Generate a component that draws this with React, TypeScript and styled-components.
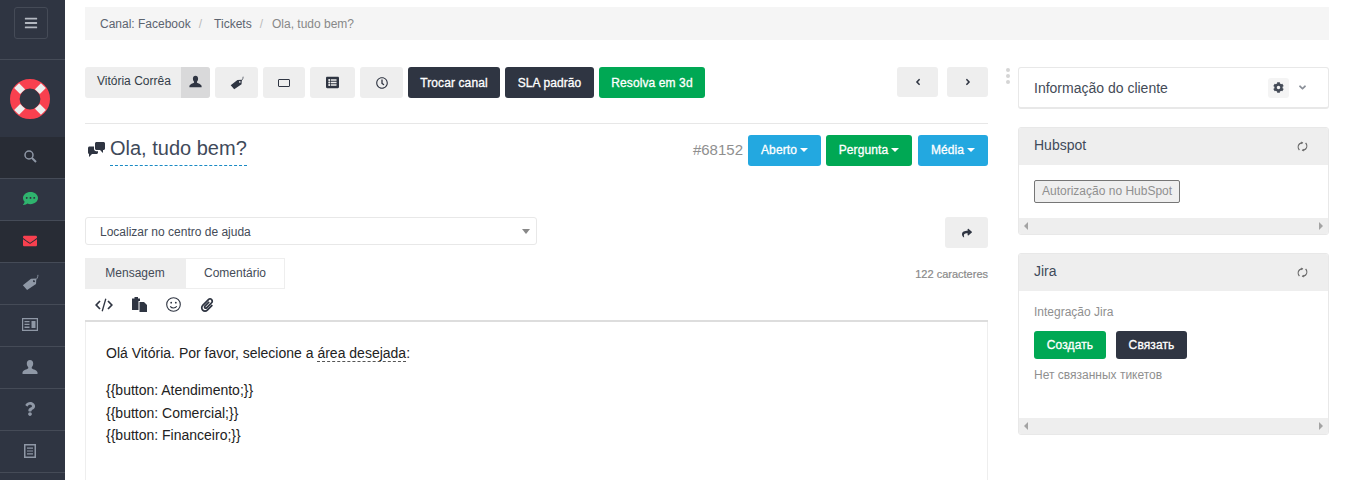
import styled, { createGlobalStyle } from "styled-components";
import {
  FaCog,
  FaCommentDots,
  FaEnvelope,
  FaPaperclip,
  FaQuestion,
  FaShare,
  FaListAlt,
  FaRegClock,
  FaAngleLeft,
  FaAngleRight,
  FaAngleDown,
  FaBars,
} from "react-icons/fa";

const GlobalStyle = createGlobalStyle`
  html, body {
    margin: 0;
    height: 100%;
    overflow: hidden;
    background: #fff;
    font-family: "Liberation Sans", Arial, sans-serif;
    font-size: 12px;
    color: #333;
  }
  * { box-sizing: border-box; }
`;

const LifeRing = () => (
  <svg width="40" height="40" viewBox="0 0 40 40">
    <circle cx="20" cy="20" r="15.2" fill="none" stroke="#f9404f" strokeWidth="9.6" />
    <g stroke="#eee" strokeWidth="7">
      <line x1="6.6" y1="6.6" x2="12.6" y2="12.6" />
      <line x1="33.4" y1="6.6" x2="27.4" y2="12.6" />
      <line x1="6.6" y1="33.4" x2="12.6" y2="27.4" />
      <line x1="33.4" y1="33.4" x2="27.4" y2="27.4" />
    </g>
  </svg>
);

const ChatBubbles = () => (
  <svg width="17" height="15" viewBox="0 0 17 15" fill="#2f3542">
    <path d="M7 1.500C7 .7 7.700 0 8.500 0h7C16.300 0 17 .7 17 1.500v5c0 .8-.7 1.500-1.500 1.500H15v3l-3-3H8.500C7.700 8 7 7.300 7 6.500z" />
    <path d="M0 6c0-.8.700-1.500 1.500-1.500H6v2.500C6 8.200 7 9.200 8.200 9.200H10v1.300c0 .8-.7 1.500-1.500 1.500H4l-3 3v-3.100C.4 11.700 0 11.200 0 10.500z" />
  </svg>
);

const UserIcon = ({ size }: { size: number }) => (
  <svg width={size} height={size} viewBox="0 0 16 16" fill="currentColor">
    <path d="M8 1C6 1 4.800 2.500 4.800 4.500c0 1.400.5 2.700 1.300 3.500.3.400.3 1 0 1.400C4.800 10.300 1.400 10.800 .5 13.200V15h15v-1.800c-.9-2.400-4.300-2.900-5.600-3.800-.3-.4-.3-1 0-1.400.8-.8 1.300-2.100 1.300-3.500C11.200 2.500 10 1 8 1z" />
  </svg>
);

const TagIcon = ({ size }: { size: number }) => (
  <svg width={size} height={size} viewBox="0 0 16 16">
    <path
      fill="currentColor"
      fillRule="evenodd"
      d="M.8 10.500 8.500 4.500l5-.2-.3 5L4.800 15zM10.700 5.900a1 1 0 1 0 1.200 1.600 1 1 0 0 0-1.200-1.600z"
    />
    <path d="M11.800 6C13.800 5.200 15 3.500 15 .8" fill="none" stroke="currentColor" strokeWidth=".8" />
  </svg>
);

const SearchIcon = () => (
  <svg width="13" height="13" viewBox="0 0 13 13" fill="none" stroke="currentColor">
    <circle cx="5" cy="5" r="4" strokeWidth="1.500" />
    <line x1="8" y1="8" x2="12" y2="12" strokeWidth="2" />
  </svg>
);

const CardIcon = () => (
  <svg width="16" height="13" viewBox="0 0 16 13" fill="currentColor">
    <path
      fillRule="evenodd"
      d="M0 0h16v13H0zM1.200 1.200v10.600h13.600V1.200z"
    />
    <path d="M2.500 3h5v1.300h-5zM2.500 5.800h5v1.300h-5zM2.500 8.600h5v1.300h-5zM9.500 3h4v6.900h-4z" />
  </svg>
);

const DocIcon = () => (
  <svg width="12" height="14" viewBox="0 0 12 14" fill="currentColor">
    <path fillRule="evenodd" d="M0 0h12v14H0zM1.500 1.500v11h9v-11z" />
    <path d="M3 3.500h6v1.200H3zM3 6.400h6v1.200H3zM3 9.300h6v1.200H3z" />
  </svg>
);

const CodeIcon = () => (
  <svg width="18" height="14" viewBox="0 0 18 14" fill="none" stroke="currentColor" strokeWidth="1.700">
    <path d="M5 3 1.200 7 5 11M13 3l3.800 4L13 11" />
    <path d="M10.800 .8 7.200 13.200" strokeWidth="1.300" />
  </svg>
);

const PasteIcon = () => (
  <svg width="15" height="15" viewBox="0 0 15 15" fill="currentColor">
    <path d="M0 1.500h2.500V0h3.500v1.500h2V4H6.500v9H0z" />
    <path d="M7.500 5h4.500l3 3v7H7.500z" />
  </svg>
);

const SmileIcon = () => (
  <svg width="15" height="15" viewBox="0 0 15 15" fill="none" stroke="currentColor" strokeWidth="1.100">
    <circle cx="7.500" cy="7.500" r="6.800" />
    <path d="M4.200 9.300c1.700 2.200 5 2.200 6.600 0" />
    <circle cx="5.200" cy="5.700" r=".9" fill="currentColor" stroke="none" />
    <circle cx="9.800" cy="5.700" r=".9" fill="currentColor" stroke="none" />
  </svg>
);

const RefreshIcon = () => (
  <svg width="11" height="11" viewBox="0 0 11 11" fill="none" stroke="#666" strokeWidth="1.200">
    <path d="M2.400 9C.8 7.300.8 4.600 2.400 3c.9-.9 1.900-1.200 3-1.200" />
    <path d="M8.600 2c1.600 1.700 1.600 4.400 0 6-.9.900-1.900 1.200-3 1.200" />
    <path d="M4.300.4l2 1.400-2 1.400zM6.700 7.800l-2 1.400 2 1.400z" fill="#666" stroke="none" />
  </svg>
);

const menuItems = [
  { icon: <SearchIcon />, dark: true, color: "#8f98a6" },
  { icon: <FaCommentDots size={15} />, dark: false, color: "#2fb46e" },
  { icon: <FaEnvelope size={14} />, dark: true, color: "#f9404f" },
  { icon: <TagIcon size={17} />, dark: false, color: "#8f98a6" },
  { icon: <CardIcon />, dark: false, color: "#8f98a6" },
  { icon: <UserIcon size={16} />, dark: false, color: "#8f98a6" },
  { icon: <FaQuestion size={14} />, dark: false, color: "#8f98a6" },
  { icon: <DocIcon />, dark: false, color: "#8f98a6" },
];

const App = () => {
  return (
    <Layout>
      <GlobalStyle />
      <Sidebar>
        <MenuTop>
          <MenuToggle>
            <FaBars size={14} />
          </MenuToggle>
        </MenuTop>
        <LogoBox>
          <LifeRing />
        </LogoBox>
        {menuItems.map((item, i) => (
          <MenuItem key={i} $dark={item.dark} $color={item.color}>
            {item.icon}
          </MenuItem>
        ))}
      </Sidebar>

      <Content>
        <Breadcrumb>
          <Crumb>Canal: Facebook</Crumb>
          <CrumbSep $extra={3}>/</CrumbSep>
          <Crumb>Tickets</Crumb>
          <CrumbSep>/</CrumbSep>
          <CrumbActive>Ola, tudo bem?</CrumbActive>
        </Breadcrumb>

        <Columns>
          <MainColumn>
            <Toolbar>
              <AgentGroup>
                <AgentName>Vitória Corrêa</AgentName>
                <AgentIcon>
                  <UserIcon size={13} />
                </AgentIcon>
              </AgentGroup>
              <GreyButton $width={43}>
                <TagIcon size={14} />
              </GreyButton>
              <GreyButton $width={42}>
                <RectIcon />
              </GreyButton>
              <GreyButton $width={45}>
                <FaListAlt size={13} />
              </GreyButton>
              <GreyButton $width={43}>
                <FaRegClock size={12} />
              </GreyButton>
              <ActionButton $bg="#2f3542" $width={92}>Trocar canal</ActionButton>
              <ActionButton $bg="#2f3542" $width={89}>SLA padrão</ActionButton>
              <ActionButton $bg="#00a854" $width={106}>Resolva em 3d</ActionButton>
              <Pager>
                <PagerButton>
                  <FaAngleLeft size={10} />
                </PagerButton>
                <PagerButton>
                  <FaAngleRight size={10} />
                </PagerButton>
              </Pager>
            </Toolbar>

            <Divider />

            <TitleRow>
              <TitleLeft>
                <ChatBubbles />
                <Title>Ola, tudo bem?</Title>
              </TitleLeft>
              <TitleRight>
                <TicketId>#68152</TicketId>
                <DropButton $bg="#23a8e0" $width={73}>Aberto<Caret /></DropButton>
                <DropButton $bg="#00a854" $width={86}>Pergunta<Caret /></DropButton>
                <DropButton $bg="#23a8e0" $width={70} $shift={1}>Média<Caret /></DropButton>
              </TitleRight>
            </TitleRow>

            <SearchRow>
              <HelpSelect>
                Localizar no centro de ajuda
                <SelectCaret />
              </HelpSelect>
              <ShareButton>
                <FaShare size={10} />
              </ShareButton>
            </SearchRow>

            <TabsRow>
              <Tab>Mensagem</Tab>
              <Tab $active>Comentário</Tab>
              <CharCount>122 caracteres</CharCount>
            </TabsRow>

            <EditorTools>
              <CodeIcon />
              <PasteIcon />
              <SmileIcon />
              <FaPaperclip size={14} />
            </EditorTools>

            <Editor>
              <p>
                Olá Vitória. Por favor, selecione a <Spell>área desejada</Spell>:
              </p>
              <p>
                {"{{button: Atendimento;}}"}
                <br />
                {"{{button: Comercial;}}"}
                <br />
                {"{{button: Financeiro;}}"}
              </p>
            </Editor>
          </MainColumn>

          <DragHandle>
            <i />
            <i />
            <i />
          </DragHandle>

          <SideColumn>
            <InfoCard>
              <InfoTitle>Informação do cliente</InfoTitle>
              <CogBox>
                <FaCog size={11} />
              </CogBox>
              <FaAngleDown size={11} color="#8a8f98" />
            </InfoCard>

            <Panel>
              <PanelHead>
                <PanelTitle>Hubspot</PanelTitle>
                <RefreshIcon />
              </PanelHead>
              <HubspotBody>
                <NativeButton>Autorização no HubSpot</NativeButton>
              </HubspotBody>
              <ScrollStrip>
                <ArrowLeft />
                <ArrowRight />
              </ScrollStrip>
            </Panel>

            <Panel>
              <PanelHead>
                <PanelTitle>Jira</PanelTitle>
                <RefreshIcon />
              </PanelHead>
              <JiraBody>
                <MutedText>Integração Jira</MutedText>
                <JiraButtons>
                  <ActionButton $bg="#00a854" $width={72} $height={28}>Создать</ActionButton>
                  <ActionButton $bg="#2f3542" $width={71} $height={28}>Связать</ActionButton>
                </JiraButtons>
                <MutedText>Нет связанных тикетов</MutedText>
              </JiraBody>
              <ScrollStrip>
                <ArrowLeft />
                <ArrowRight />
              </ScrollStrip>
            </Panel>
          </SideColumn>
        </Columns>
      </Content>
    </Layout>
  );
};

const Layout = styled.div`
  display: flex;
  height: 480px;
  overflow: hidden;
`;

const Sidebar = styled.aside`
  flex: 0 0 65px;
  background: #2f3542;
`;

const MenuTop = styled.div`
  height: 60px;
  padding: 7px 4px 0 0;
  border-bottom: 1px solid #454b57;
  display: flex;
  justify-content: center;
`;

const MenuToggle = styled.div`
  width: 34px;
  height: 32px;
  border: 1px solid #454b57;
  border-radius: 3px;
  color: #b4b9c1;
  display: flex;
  align-items: center;
  justify-content: center;
`;

const LogoBox = styled.div`
  height: 77px;
  padding-right: 5px;
  display: flex;
  align-items: center;
  justify-content: center;
`;

const MenuItem = styled.div<{ $dark: boolean; $color: string }>`
  height: 42px;
  padding: 0 5px 2px 0;
  display: flex;
  align-items: center;
  justify-content: center;
  background: ${(p) => (p.$dark ? "#282c35" : "#2f3542")};
  color: ${(p) => p.$color};
  border-bottom: 1px solid #454b57;
`;

const Content = styled.main`
  flex: 1;
  padding: 7px 18px 0 20px;
  min-width: 0;
`;

const Breadcrumb = styled.div`
  height: 33px;
  background: #f5f5f5;
  padding: 0 15px;
  display: flex;
  align-items: center;
  line-height: 1;
`;

const Crumb = styled.span`
  color: #5c6470;
`;

const CrumbSep = styled.span<{ $extra?: number }>`
  color: #bbb;
  margin: 0 ${(p) => 9 + (p.$extra ?? 0)}px 0 8px;
`;

const CrumbActive = styled.span`
  color: #888;
`;

const Columns = styled.div`
  display: flex;
  margin-top: 27px;
`;

const MainColumn = styled.section`
  flex: 0 0 903px;
`;

const Toolbar = styled.div`
  display: flex;
  gap: 5px;
  height: 31px;
`;

const AgentGroup = styled.div`
  display: flex;
  width: 125px;
  border-radius: 3px;
  overflow: hidden;
  background: #eee;
`;

const AgentName = styled.div`
  flex: 1;
  padding-left: 12px;
  line-height: 28px;
  color: #333c48;
`;

const AgentIcon = styled.div`
  width: 29px;
  padding-bottom: 3px;
  background: #d9d9da;
  color: #2f3542;
  display: flex;
  align-items: center;
  justify-content: center;
`;

const GreyButton = styled.div<{ $width: number }>`
  width: ${(p) => p.$width}px;
  background: #eee;
  border-radius: 3px;
  color: #2f3542;
  display: flex;
  align-items: center;
  justify-content: center;
`;

const RectIcon = styled.span`
  width: 12px;
  height: 8px;
  border: 1px solid #2f3542;
  border-radius: 1px;
  margin-top: 1px;
`;

const ActionButton = styled.div<{ $bg: string; $width: number; $height?: number }>`
  width: ${(p) => p.$width}px;
  height: ${(p) => p.$height ?? 31}px;
  background: ${(p) => p.$bg};
  border-radius: 3px;
  color: #fff;
  font-size: 12px;
  letter-spacing: 0.1px;
  -webkit-text-stroke: 0.3px #fff;
  display: flex;
  align-items: center;
  justify-content: center;
`;

const Pager = styled.div`
  margin-left: auto;
  display: flex;
  gap: 9px;
`;

const PagerButton = styled.div`
  width: 41px;
  height: 30px;
  background: #eee;
  border-radius: 3px;
  color: #2f3542;
  display: flex;
  align-items: center;
  justify-content: center;
`;

const Divider = styled.div`
  height: 1px;
  background: #e7e7e7;
  margin-top: 25px;
`;

const TitleRow = styled.div`
  display: flex;
  justify-content: space-between;
  margin-top: 11px;
  height: 82px;
`;

const TitleLeft = styled.div`
  display: flex;
  align-items: flex-start;
  gap: 5px;
  padding: 7px 0 0 3px;
`;

const Title = styled.h1`
  margin: -7px 0 0;
  font-size: 20px;
  font-weight: 400;
  line-height: 26px;
  height: 31px;
  color: #3f4a5a;
  border-bottom: 1px dashed #1a8ac4;
`;

const TitleRight = styled.div`
  display: flex;
  gap: 5px;
  align-items: flex-start;
`;

const TicketId = styled.span`
  font-size: 15px;
  line-height: 29px;
  color: #8f8f8f;
`;

const DropButton = styled.div<{ $bg: string; $width: number; $shift?: number }>`
  width: ${(p) => p.$width}px;
  height: 31px;
  margin-left: ${(p) => p.$shift ?? 0}px;
  background: ${(p) => p.$bg};
  border-radius: 3px;
  color: #fff;
  letter-spacing: 0.1px;
  -webkit-text-stroke: 0.3px #fff;
  padding-bottom: 2px;
  display: flex;
  align-items: center;
  justify-content: center;
  gap: 3px;
`;

const Caret = styled.span`
  margin-top: 1px;
  border-top: 4px solid #fff;
  border-left: 4px solid transparent;
  border-right: 4px solid transparent;
`;

const SearchRow = styled.div`
  display: flex;
  justify-content: space-between;
  align-items: flex-start;
`;

const HelpSelect = styled.div`
  position: relative;
  width: 452px;
  height: 28px;
  border: 1px solid #e8e8e8;
  border-radius: 3px;
  padding-left: 14px;
  line-height: 28px;
  color: #444b57;
`;

const SelectCaret = styled.span`
  position: absolute;
  right: 6px;
  top: 11px;
  border-top: 5px solid #888;
  border-left: 4px solid transparent;
  border-right: 4px solid transparent;
`;

const ShareButton = styled.div`
  width: 43px;
  height: 31px;
  background: #eee;
  border-radius: 3px;
  color: #2f3542;
  display: flex;
  align-items: center;
  justify-content: center;
`;

const TabsRow = styled.div`
  display: flex;
  align-items: center;
  margin-top: 10px;
  height: 31px;
`;

const Tab = styled.div<{ $active?: boolean }>`
  width: 100px;
  height: 31px;
  line-height: 29px;
  text-align: center;
  color: #444b57;
  background: ${(p) => (p.$active ? "#fff" : "#eee")};
  border: 1px solid #eee;
`;

const CharCount = styled.span`
  margin-left: auto;
  font-size: 11px;
  color: #8a8a8a;
  -webkit-text-stroke: 0.2px #8a8a8a;
`;

const EditorTools = styled.div`
  height: 33px;
  display: flex;
  align-items: center;
  gap: 19px;
  padding: 0 0 0 10px;
  color: #2f3542;
  border-bottom: 2px solid #ddd;
`;

const Editor = styled.div`
  height: 170px;
  padding: 20px 20px;
  border: 1px solid #eee;
  border-top: 0;
  font-size: 14px;
  line-height: 22.4px;
  color: #222;
  p {
    margin: 0 0 15px;
  }
`;

const Spell = styled.span`
  border-bottom: 1px dashed #555;
`;

const DragHandle = styled.div`
  flex: 0 0 30px;
  display: flex;
  flex-direction: column;
  gap: 2px;
  padding: 1px 0 0 18px;
  i {
    width: 4px;
    height: 4px;
    border-radius: 50%;
    background: #d5d5d5;
  }
`;

const SideColumn = styled.aside`
  flex: 0 0 311px;
  display: flex;
  flex-direction: column;
  gap: 18px;
`;

const InfoCard = styled.div`
  height: 42px;
  border: 1px solid #e8e8e8;
  border-bottom-width: 2px;
  border-radius: 3px;
  padding: 0 20px 0 15px;
  display: flex;
  align-items: center;
`;

const InfoTitle = styled.div`
  flex: 1;
  font-size: 14px;
  color: #444b57;
`;

const CogBox = styled.div`
  width: 21px;
  height: 20px;
  margin-right: 8px;
  background: #f4f4f4;
  border-radius: 3px;
  color: #444b57;
  display: flex;
  align-items: center;
  justify-content: center;
`;

const Panel = styled.div`
  border: 1px solid #e8e8e8;
  border-radius: 3px;
  overflow: hidden;
`;

const PanelHead = styled.div`
  height: 37px;
  background: #eee;
  padding: 0 20px 0 15px;
  display: flex;
  align-items: center;
  justify-content: space-between;
  font-size: 14px;
  color: #3f4a5a;
`;

const PanelTitle = styled.span`
  margin-top: -4px;
`;

const HubspotBody = styled.div`
  height: 53px;
  padding: 15px 15px 0;
`;

const NativeButton = styled.div`
  display: inline-block;
  height: 23px;
  line-height: 21px;
  padding: 0 7px;
  border: 1px solid #767676;
  border-radius: 2px;
  background: #efefef;
  color: #8f8f8f;
`;

const JiraBody = styled.div`
  height: 127px;
  padding: 13px 15px 0;
`;

const MutedText = styled.div`
  color: #8f8f8f;
  line-height: 16px;
`;

const JiraButtons = styled.div`
  display: flex;
  gap: 10px;
  margin: 11px 0 8px;
`;

const ScrollStrip = styled.div`
  height: 16px;
  background: #eee;
  padding: 0 5px;
  display: flex;
  align-items: center;
  justify-content: space-between;
`;

const ArrowLeft = styled.span`
  border-right: 4px solid #a3a3a3;
  border-top: 4px solid transparent;
  border-bottom: 4px solid transparent;
`;

const ArrowRight = styled.span`
  border-left: 4px solid #a3a3a3;
  border-top: 4px solid transparent;
  border-bottom: 4px solid transparent;
`;

export default App;
